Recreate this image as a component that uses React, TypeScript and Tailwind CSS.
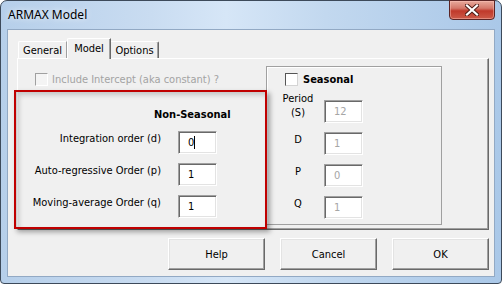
import React from 'react';

const UI = "font-['DejaVu_Sans_Condensed','DejaVu_Sans',sans-serif] text-[11px] leading-[15px] text-black";

type FieldProps = { value: string; disabled?: boolean; caret?: boolean };

function Field({ value, disabled, caret }: FieldProps) {
  return (
    <div className="w-[39px] h-[23px] shrink-0 flex items-center pl-[9px] bg-white border border-t-[#a0a0a0] border-l-[#a0a0a0] border-r-white border-b-white shadow-[inset_1px_1px_0_#696969,inset_-1px_-1px_0_#e3e3e3]">
      <span className={disabled ? 'text-[#a6a6a6]' : 'text-black'}>{value}</span>
      {caret && <span className="w-px h-[13px] bg-black" />}
    </div>
  );
}

function Btn({ label }: { label: string }) {
  return (
    <div className="w-[97px] h-[32px] flex items-center justify-center bg-[#f0f0f0] border border-t-white border-l-white border-r-[#696969] border-b-[#696969] shadow-[inset_-1px_-1px_0_#a0a0a0,inset_1px_1px_0_#e3e3e3]">
      {label}
    </div>
  );
}

function CloseButton() {
  return (
    <div className="w-[46px] h-[20px] -mt-[1px] rounded-b-[4px] border border-[#5b2424] bg-[linear-gradient(180deg,#e8aa9c_0%,#d4786a_40%,#c0392b_55%,#cc5a48_100%)] flex items-center justify-center shadow-[inset_0_0_0_1px_rgba(255,200,190,0.45)]">
      <svg width="14" height="12" viewBox="0 0 14 12">
        <path d="M2 1.5 L12 10.5 M12 1.5 L2 10.5" stroke="#4a1a14" strokeWidth="4" strokeLinecap="square" />
        <path d="M2 1.5 L12 10.5 M12 1.5 L2 10.5" stroke="#ffffff" strokeWidth="2.2" strokeLinecap="square" />
      </svg>
    </div>
  );
}

export default function App() {
  return (
    <div className={`relative w-[502px] h-[284px] bg-white ${UI}`}>
      <div className="w-[502px] h-[284px] flex flex-col rounded-t-[7px] rounded-b-[4px] border border-[#3d4a5a] bg-[linear-gradient(90deg,#b6cfea_0%,#c9dcf1_30%,#d6e6f7_45%,#c2d8ef_65%,#aac8e8_100%)]">
        {/* title bar */}
        <div className="h-[28px] flex items-start justify-between">
          <span className="ml-[7px] mt-[5px] font-['Noto_Sans',sans-serif] text-[12px] leading-[18px] [text-shadow:0_0_6px_#ffffff]">ARMAX Model</span>
          <div className="mr-[6px]">
            <CloseButton />
          </div>
        </div>

        {/* client area */}
        <div className="mx-[6px] h-[248px] border border-[#92a9c4] bg-[#f0f0f0] flex flex-col">
          {/* tabs */}
          <div className="mt-[8px] ml-[10px] h-[20px] flex items-end">
            <div className="w-[49px] h-[17px] pt-[1px] flex items-center justify-center rounded-tl-[2px] border-t border-l border-white border-r border-r-[#a0a0a0]">
              General
            </div>
            <div className="relative z-10 w-[44px] h-[21px] -mb-[1px] pb-[2px] flex items-center justify-center bg-[#f0f0f0] rounded-tl-[2px] border-t border-l border-white border-r border-r-[#696969] shadow-[inset_-1px_0_0_#a0a0a0]">
              Model
            </div>
            <div className="w-[48px] h-[17px] pt-[1px] flex items-center justify-center rounded-tr-[2px] border-t border-white border-r border-r-[#696969] shadow-[inset_-1px_0_0_#a0a0a0]">
              Options
            </div>
          </div>

          {/* tab page */}
          <div className="ml-[9px] w-[472px] h-[172px] flex border border-t-white border-l-white border-r-[#696969] border-b-[#696969] shadow-[inset_-1px_-1px_0_#a0a0a0]">
            {/* non-seasonal */}
            <div className="w-[248px] flex flex-col">
              <div className="mt-[14px] ml-[17px] h-[13px] flex items-center">
                <span className="w-[13px] h-[13px] border border-t-[#a0a0a0] border-l-[#a0a0a0] border-r-white border-b-white bg-[#f4f4f4]" />
                <span className="ml-[4px] text-[#a3a3a3]">Include Intercept (aka constant) ?</span>
              </div>
              <div className="mt-[21px] ml-[136px] font-bold">Non-Seasonal</div>
              <div className="mt-[9px] flex flex-col gap-[9px]">
                {[
                  ['Integration order (d)', '0'],
                  ['Auto-regressive Order (p)', '1'],
                  ['Moving-average Order (q)', '1'],
                ].map(([label, v], i) => (
                  <div key={label} className="h-[23px] flex items-start">
                    <span className="w-[143px] text-right">{label}</span>
                    <div className="ml-[17px]">
                      <Field value={v} caret={i === 0} />
                    </div>
                  </div>
                ))}
              </div>
            </div>

            {/* seasonal group */}
            <div className="mt-[7px] w-[176px] h-[159px] flex flex-col border border-[#a0a0a0] shadow-[inset_1px_1px_0_#ffffff]">
              <div className="mt-[6px] ml-[18px] h-[13px] flex items-center">
                <span className="w-[13px] h-[13px] border border-t-[#555555] border-l-[#555555] border-r-[#d4d4d4] border-b-[#d4d4d4] bg-white" />
                <span className="ml-[5px] font-bold">Seasonal</span>
              </div>
              <div className="mt-[14px] flex flex-col gap-[9px]">
                <div className="h-[23px] flex items-start pl-[9px]">
                  <span className="w-[44px] -mt-[8px] text-center leading-[14px]">
                    Period
                    <br />
                    (S)
                  </span>
                  <div className="ml-[4px]">
                    <Field value="12" disabled />
                  </div>
                </div>
                {[
                  ['D', '1'],
                  ['P', '0'],
                  ['Q', '1'],
                ].map(([label, v]) => (
                  <div key={label} className="h-[23px] flex items-start pl-[9px]">
                    <span className="w-[44px] text-center">{label}</span>
                    <div className="ml-[4px]">
                      <Field value={v} disabled />
                    </div>
                  </div>
                ))}
              </div>
            </div>
          </div>

          {/* buttons */}
          <div className="mt-[8px] ml-[160px] flex gap-[15px]">
            <Btn label="Help" />
            <Btn label="Cancel" />
            <Btn label="OK" />
          </div>
        </div>
      </div>

      {/* red annotation box */}
      <div className="absolute left-[14px] top-[90px] w-[253px] h-[139px] border-2 border-[#c00000] shadow-[3px_3px_5px_rgba(0,0,0,0.35),inset_3px_3px_5px_rgba(0,0,0,0.18)]" />
    </div>
  );
}
